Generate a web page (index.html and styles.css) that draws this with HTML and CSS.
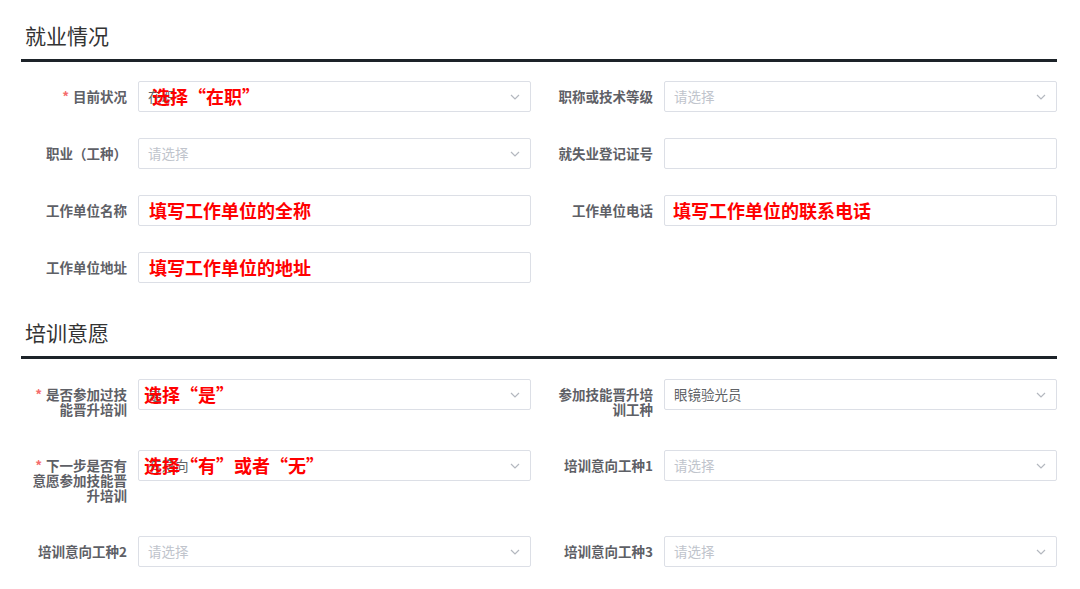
FILE: index.html
```html
<!DOCTYPE html>
<html lang="zh-CN">

<head>
    <meta charset="UTF-8" />
    <meta name="viewport" content="width=device-width, initial-scale=1.0" />
    <title>就业情况 / 培训意愿</title>
    <link rel="stylesheet" href="styles.css">
</head>

<body>
    <div class="page">
        <section class="block">
            <h2 class="block-title">就业情况</h2>
            <div class="form-grid">
                <div class="item">
                    <label class="item-label"><span class="req">*</span>目前状况</label>
                    <div class="field">
                        <span class="value">在职</span>
                        <svg class="arrow" width="10" height="6" viewBox="0 0 10 6"><polyline points="1,1 5,5 9,1" /></svg>
                        <span class="note note-row1">选择“在职”</span>
                    </div>
                </div>
                <div class="item">
                    <label class="item-label">职称或技术等级</label>
                    <div class="field">
                        <span class="placeholder">请选择</span>
                        <svg class="arrow" width="10" height="6" viewBox="0 0 10 6"><polyline points="1,1 5,5 9,1" /></svg>
                    </div>
                </div>
                <div class="item">
                    <label class="item-label">职业（工种）</label>
                    <div class="field">
                        <span class="placeholder">请选择</span>
                        <svg class="arrow" width="10" height="6" viewBox="0 0 10 6"><polyline points="1,1 5,5 9,1" /></svg>
                    </div>
                </div>
                <div class="item">
                    <label class="item-label">就失业登记证号</label>
                    <div class="field"></div>
                </div>
                <div class="item">
                    <label class="item-label">工作单位名称</label>
                    <div class="field">
                        <span class="note">填写工作单位的全称</span>
                    </div>
                </div>
                <div class="item">
                    <label class="item-label">工作单位电话</label>
                    <div class="field">
                        <span class="note note-right">填写工作单位的联系电话</span>
                    </div>
                </div>
                <div class="item">
                    <label class="item-label">工作单位地址</label>
                    <div class="field">
                        <span class="note">填写工作单位的地址</span>
                    </div>
                </div>
            </div>
        </section>

        <section class="block block-second">
            <h2 class="block-title">培训意愿</h2>
            <div class="form-grid">
                <div class="item">
                    <label class="item-label"><span class="req">*</span>是否参加过技能晋升培训</label>
                    <div class="field">
                        <span class="value">是</span>
                        <svg class="arrow" width="10" height="6" viewBox="0 0 10 6"><polyline points="1,1 5,5 9,1" /></svg>
                        <span class="note note-tight">选择“是”</span>
                    </div>
                </div>
                <div class="item">
                    <label class="item-label">参加技能晋升培训工种</label>
                    <div class="field">
                        <span class="value">眼镜验光员</span>
                        <svg class="arrow" width="10" height="6" viewBox="0 0 10 6"><polyline points="1,1 5,5 9,1" /></svg>
                    </div>
                </div>
                <div class="item">
                    <label class="item-label"><span class="req">*</span>下一步是否有意愿参加技能晋升培训</label>
                    <div class="field">
                        <span class="value">有意向</span>
                        <svg class="arrow" width="10" height="6" viewBox="0 0 10 6"><polyline points="1,1 5,5 9,1" /></svg>
                        <span class="note note-tight">选择“有”或者“无”</span>
                    </div>
                </div>
                <div class="item">
                    <label class="item-label">培训意向工种1</label>
                    <div class="field">
                        <span class="placeholder">请选择</span>
                        <svg class="arrow" width="10" height="6" viewBox="0 0 10 6"><polyline points="1,1 5,5 9,1" /></svg>
                    </div>
                </div>
                <div class="item">
                    <label class="item-label">培训意向工种2</label>
                    <div class="field">
                        <span class="placeholder">请选择</span>
                        <svg class="arrow" width="10" height="6" viewBox="0 0 10 6"><polyline points="1,1 5,5 9,1" /></svg>
                    </div>
                </div>
                <div class="item">
                    <label class="item-label">培训意向工种3</label>
                    <div class="field">
                        <span class="placeholder">请选择</span>
                        <svg class="arrow" width="10" height="6" viewBox="0 0 10 6"><polyline points="1,1 5,5 9,1" /></svg>
                    </div>
                </div>
            </div>
        </section>
    </div>
</body>

</html>
```

FILE: styles.css
```css
body {
    margin: 0;
    background-color: #fff;
    color: #606266;
    font-family: "Noto Sans CJK SC", "Noto Sans", sans-serif;
}

.page {
    padding: 20px 23px 0 21px;
}

.block-second {
    margin-top: 34px;
}

.block-title {
    margin: 0;
    padding: 0 0 9px 4px;
    font-size: 21px;
    line-height: 30px;
    font-weight: normal;
    color: #333;
    border-bottom: 3px solid #1d2329;
}

.form-grid {
    display: grid;
    grid-template-columns: 510px 510px;
    column-gap: 16px;
    row-gap: 26px;
    margin-top: 19px;
}

.block-second .form-grid {
    margin-top: 20px;
}

.item {
    display: flex;
    align-items: flex-start;
}

.item-label {
    width: 117px;
    flex-shrink: 0;
    box-sizing: border-box;
    padding: 8px 11px 7px 9px;
    font-size: 13.5px;
    line-height: 15px;
    font-weight: bold;
    text-align: right;
    color: #5e6066;
}

.req {
    color: #f56c6c;
    margin-right: 4px;
}

.field {
    position: relative;
    flex: 1;
    height: 31px;
    box-sizing: border-box;
    border: 1px solid #dcdfe6;
    border-radius: 2px;
    padding: 0 9px;
    font-size: 13.5px;
    line-height: 29px;
    background-color: #fff;
}

.placeholder {
    color: #c0c4cc;
}

.value {
    color: #606266;
}

.arrow {
    position: absolute;
    right: 10px;
    top: 12px;
    fill: none;
    stroke: #b4b8bf;
    stroke-width: 1.2;
}

.note {
    position: absolute;
    left: 10px;
    top: 0;
    font-size: 18px;
    line-height: 29px;
    font-weight: bold;
    color: #f00;
    white-space: nowrap;
}

.note-row1 {
    left: 13px;
}

.note-right {
    left: 8px;
}

.note-tight {
    left: 5px;
}
```
